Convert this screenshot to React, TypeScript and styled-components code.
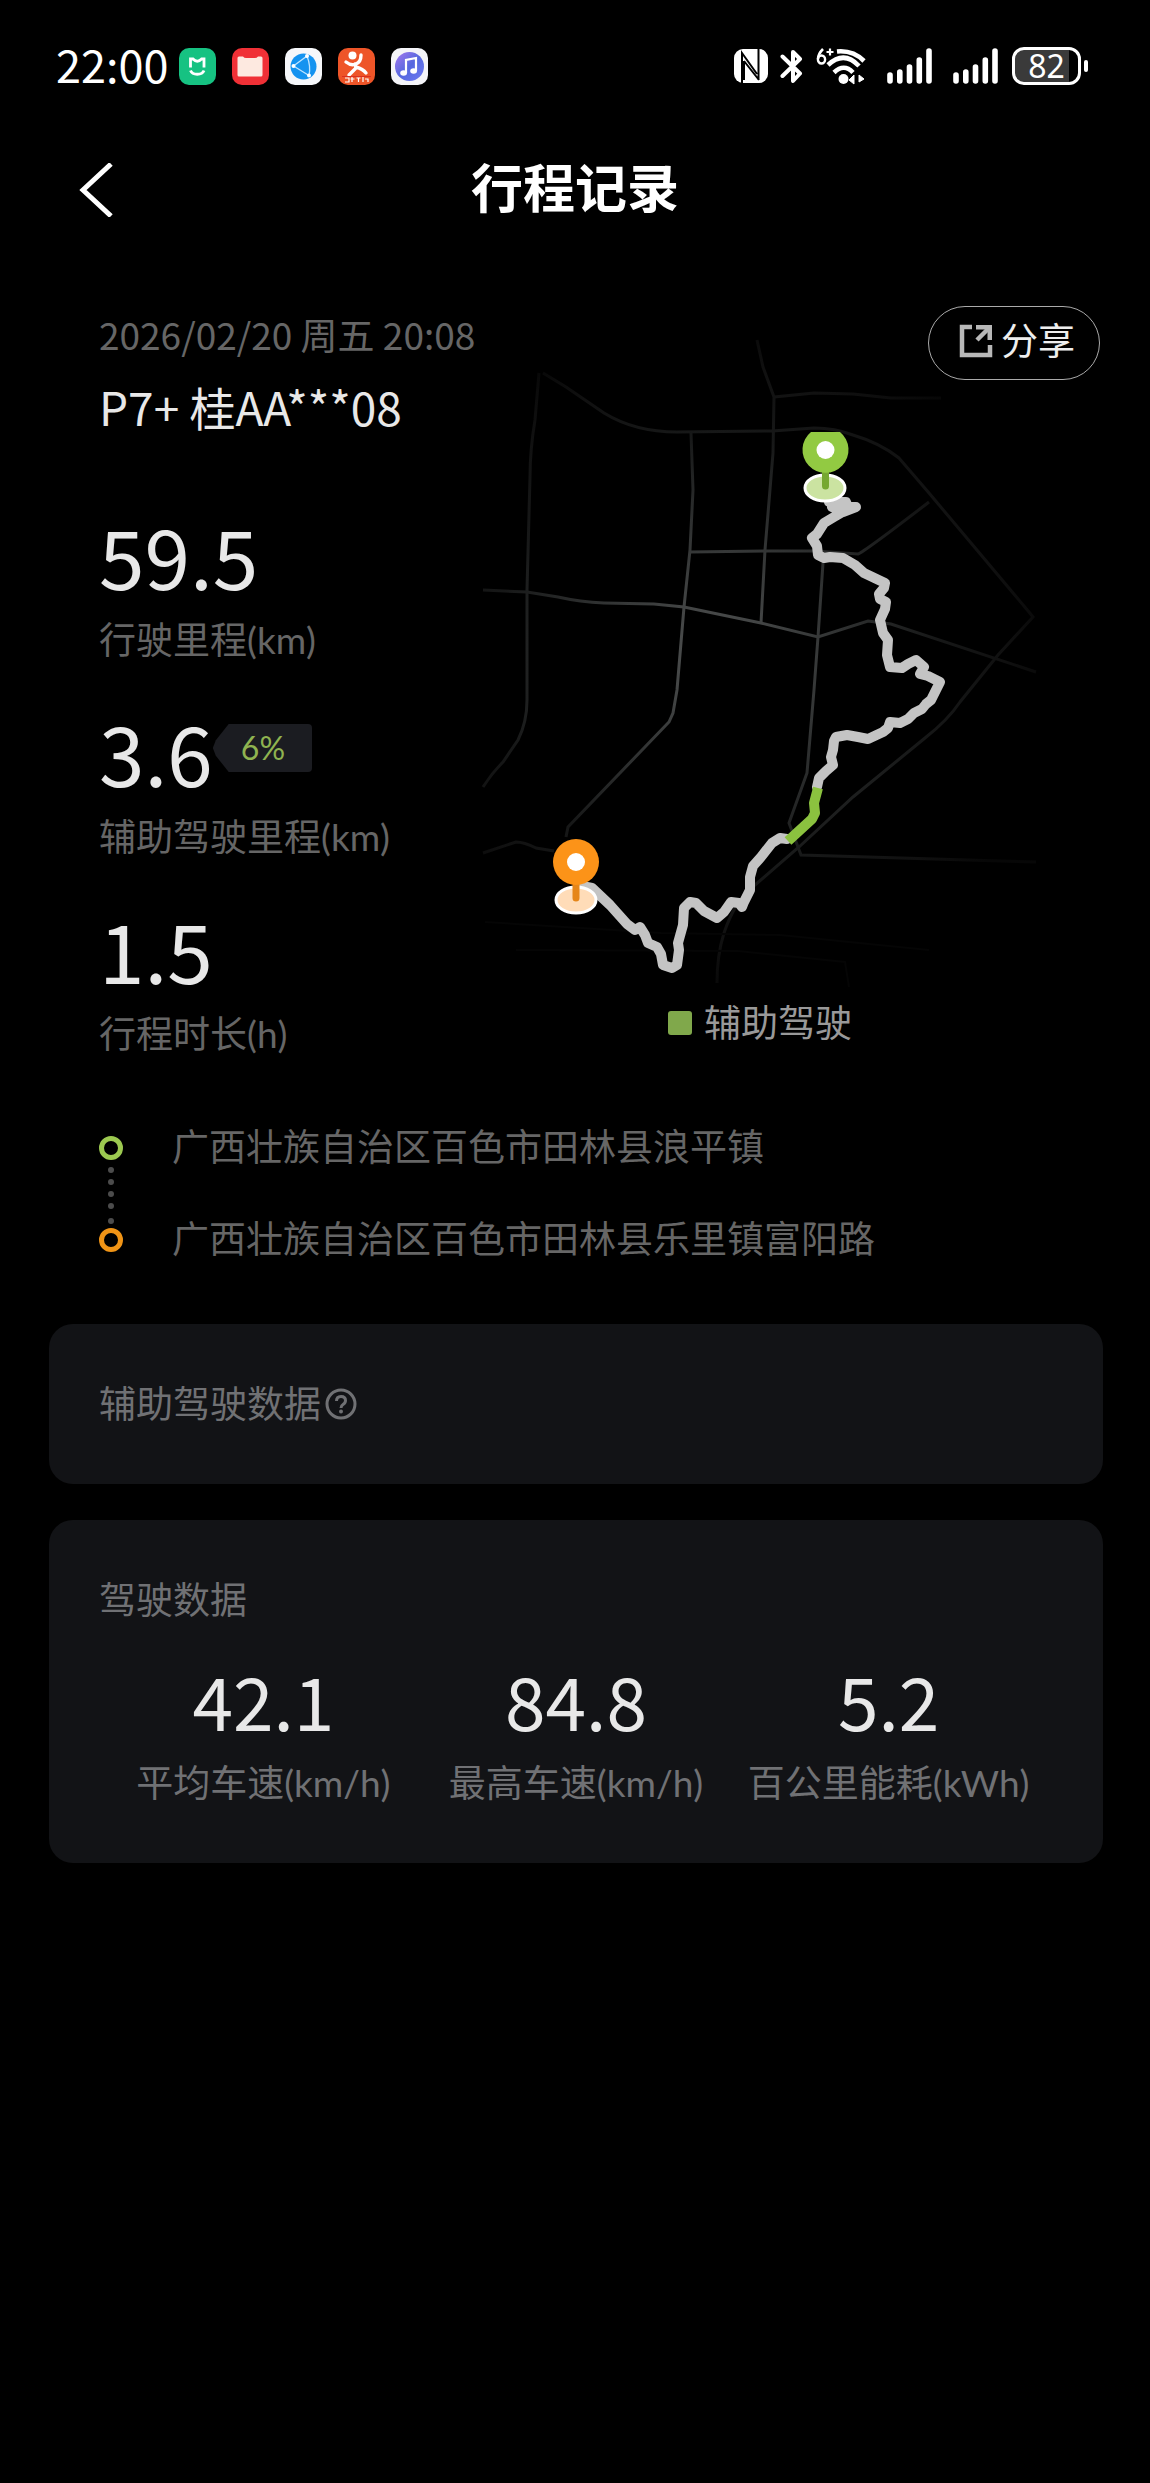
import React from 'react';
import styled, { createGlobalStyle } from 'styled-components';

const GlobalStyle = createGlobalStyle`
  * { box-sizing: border-box; }
  body {
    margin: 0;
    background: #000;
    color: #e8e8e8;
    font-family: Lato, "Noto Sans CJK SC", sans-serif;
  }
  h1, h2, p, ul, dl, dd { margin: 0; padding: 0; }
  svg { display: block; flex: none; }
`;

const numerals = '"Noto Sans CJK SC", sans-serif';

const Page = styled.div`
  min-height: 100vh;
  background: #000;
`;

const StatusBar = styled.div`
  display: flex;
  justify-content: space-between;
  align-items: center;
  height: 132px;
  padding: 0 62px 0 56px;
`;

const StatusGroup = styled.div<{ $gap: number }>`
  display: flex;
  align-items: center;
  gap: ${(p) => p.$gap}px;
`;

const Clock = styled.time`
  padding-bottom: 4px;
  font-family: ${numerals};
  font-size: 45px;
  line-height: 56px;
  color: #fff;
`;

const Battery = styled.div`
  display: flex;
  align-items: center;
  gap: 3px;

  &::after {
    content: '';
    width: 4px;
    height: 12px;
    border-radius: 2px;
    background: #fff;
  }
`;

const BatteryBody = styled.span`
  display: flex;
  align-items: center;
  justify-content: center;
  width: 69px;
  height: 38px;
  border: 3px solid #fff;
  border-radius: 12px;
  background: linear-gradient(90deg, #3a3a3a 86%, #000 86%);
  font-family: "Noto Sans", sans-serif;
  font-size: 32px;
  line-height: 32px;
  color: #fff;
`;

const TitleBar = styled.header`
  display: grid;
  grid-template-columns: 64px 1fr 64px;
  align-items: center;
  height: 116px;
  padding: 0 64px;
`;

const BackButton = styled.button`
  display: flex;
  justify-content: center;
  padding: 0;
  border: 0;
  background: none;
  color: #fff;
`;

const Title = styled.h1`
  padding-bottom: 4px;
  font-size: 52px;
  line-height: 64px;
  font-weight: 700;
  text-align: center;
  color: #fff;
`;

const Overview = styled.section`
  display: grid;
  grid-template-columns: 383px 1fr;
  padding: 58px 50px 0 99px;
`;

const Summary = styled.div`
  padding-top: 4px;
  white-space: nowrap;
`;

const TripDate = styled.p`
  font-family: ${numerals};
  font-size: 37px;
  line-height: 48px;
  color: #666;
`;

const Vehicle = styled.p`
  margin-top: 20px;
  font-family: ${numerals};
  font-size: 46px;
  line-height: 56px;
`;

const StatList = styled.dl`
  display: flex;
  flex-direction: column;
  gap: 40px;
  margin-top: 73px;
`;

const Stat = styled.div`
  display: flex;
  flex-direction: column-reverse;
  gap: 13px;
`;

const StatLabel = styled.dt`
  font-size: 37px;
  line-height: 48px;
  color: #666;
`;

const StatValue = styled.dd`
  display: flex;
  font-family: ${numerals};
  font-size: 82px;
  line-height: 96px;
`;

const Badge = styled.span`
  align-self: flex-start;
  margin-top: 20px;
  padding: 0 27px 0 28px;
  border-radius: 4px;
  background: #1b1c21;
  clip-path: polygon(16% 0, 100% 0, 100% 100%, 16% 100%, 3% 66%, 0 50%, 3% 34%);
  font-family: Lato, sans-serif;
  font-size: 32px;
  line-height: 48px;
  color: #8fb350;
`;

const MapSide = styled.div`
  display: flex;
  flex-direction: column;
`;

const ShareButton = styled.button`
  display: flex;
  align-items: center;
  justify-content: center;
  gap: 8px;
  align-self: flex-end;
  width: 172px;
  height: 74px;
  padding: 0 0 4px 6px;
  border: 1px solid #aaa;
  border-radius: 37px;
  background: none;
  font-family: inherit;
  font-size: 37px;
  line-height: 48px;
  color: #eee;
`;

const MapFigure = styled.figure`
  margin: 0;
  padding-right: 62px;

  svg {
    width: 100%;
    height: auto;
    overflow: visible;
  }
`;

const Legend = styled.figcaption`
  display: flex;
  align-items: center;
  justify-content: center;
  gap: 12px;
  font-size: 37px;
  line-height: 48px;
  color: #999;

  &::before {
    content: '';
    width: 24px;
    height: 24px;
    border-radius: 3px;
    background: #80a84b;
  }
`;

const Places = styled.section`
  display: flex;
  gap: 49px;
  padding: 65px 50px 0 99px;
`;

const PlaceList = styled.ul`
  display: flex;
  flex-direction: column;
  gap: 44px;
  list-style: none;
  font-size: 37px;
  line-height: 48px;
  color: #666;
`;

const Cards = styled.main`
  display: flex;
  flex-direction: column;
  gap: 36px;
  padding: 61px 47px 60px 49px;
`;

const Card = styled.section`
  padding: 56px 50px;
  border-radius: 24px;
  background: #121316;
`;

const CardTitle = styled.h2`
  display: flex;
  align-items: center;
  gap: 4px;
  font-size: 37px;
  line-height: 48px;
  font-weight: 400;
  color: #707174;
`;

const HelpButton = styled.button`
  padding: 0;
  border: 0;
  background: none;
  color: inherit;
`;

const Metrics = styled.dl`
  display: grid;
  grid-template-columns: repeat(3, 1fr);
  margin: 31px 8px 0;
`;

const Metric = styled.div`
  display: flex;
  flex-direction: column-reverse;
  gap: 16px;
  text-align: center;
  white-space: nowrap;
`;

const MetricLabel = styled.dt`
  font-size: 37px;
  line-height: 48px;
  color: #707174;
`;

const MetricValue = styled.dd`
  font-family: ${numerals};
  font-size: 73px;
  line-height: 88px;
`;

const appIconProps = { width: 37, height: 37, viewBox: '0 0 37 37', 'aria-hidden': true };

const AppIcons = () => (
  <StatusGroup $gap={16}>
    <svg {...appIconProps}>
      <rect width="37" height="37" rx="10" fill="#16c282" />
      <path d="M11.500 19.500V11h2.500q4.300 4.500 8.600 0H25v8.500M11.500 22.500c2 5 11.500 5 13.500 0" fill="none" stroke="#fff" strokeWidth="2.800" />
    </svg>
    <svg {...appIconProps}>
      <rect width="37" height="37" rx="10" fill="#f03036" />
      <path d="M5.500 10q0-1.500 1.500-1.500h4q1.500 2 4 1.500h7q2.500.5 4-1.500h3q1.500 0 1.500 1.500v17q0 1.500-1.500 1.500H7q-1.500 0-1.500-1.500z" fill="#fde9e0" />
    </svg>
    <svg {...appIconProps}>
      <rect width="37" height="37" rx="10" fill="#f6f7fa" />
      <circle cx="18.500" cy="18.500" r="13" fill="#1593f0" />
      <path d="M22 8 8.500 18 24 27.500Q26 18 22 8" fill="none" stroke="#bfe4ff" strokeWidth="1.300" />
      <g fill="#fff"><circle cx="22" cy="8" r="2" /><circle cx="8.500" cy="18" r="2" /><circle cx="24" cy="27.500" r="2" /></g>
    </svg>
    <svg {...appIconProps}>
      <rect width="37" height="37" rx="10" fill="#ee5528" />
      <circle cx="14.500" cy="7.500" r="4" fill="#fff" />
      <path d="M8 14q5 4 10 2 5-2 5-9M17 16l1 4-7 7M18 19q7 2 10 6" fill="none" stroke="#fff" strokeWidth="3.400" strokeLinecap="round" />
      <path d="M4 28.500h29" stroke="#d93020" strokeWidth="1" />
      <path d="M7 30h4v4H7M14 29v5M12.500 31h4M18.500 30h4M20.500 30v4M25 29v5M27 31h3v3" fill="none" stroke="#fff" strokeWidth="1.200" />
    </svg>
    <svg {...appIconProps}>
      <defs>
        <linearGradient id="note" x1="0" y1="0" x2="1" y2="1">
          <stop offset="0" stopColor="#a778ee" />
          <stop offset=".5" stopColor="#5668df" />
          <stop offset="1" stopColor="#6e7bf2" />
        </linearGradient>
      </defs>
      <rect width="37" height="37" rx="10" fill="#f4f4f8" />
      <circle cx="18.500" cy="18.500" r="14.500" fill="url(#note)" />
      <path d="M15 25V12l10-2v13" fill="none" stroke="#fff" strokeWidth="2.200" />
      <ellipse cx="12.600" cy="25" rx="3.400" ry="2.800" fill="#fff" />
      <ellipse cx="22.600" cy="23" rx="3.400" ry="2.800" fill="#fff" />
    </svg>
  </StatusGroup>
);

const Signal = () => (
  <svg width="45" height="36" viewBox="0 0 45 36" aria-hidden>
    <path d="M3 27v6M12.800 24v9M22.500 19v14M32.300 12v21M42 3v30" stroke="#fff" strokeWidth="5.600" strokeLinecap="round" />
  </svg>
);

const Radios = () => (
  <StatusGroup $gap={12}>
    <svg width="34" height="34" viewBox="0 0 34 34" aria-hidden>
      <rect width="34" height="34" rx="9" fill="#fff" />
      <path d="M8 34V4L23 25M10 12 25 31M10 12v19M24.500 0v31" fill="none" stroke="#000" strokeWidth="2" />
    </svg>
    <svg width="24" height="37" viewBox="0 0 24 37" aria-hidden>
      <path d="M2.500 8.500 20 25.500 13 33V4l7 7L2.500 28" fill="none" stroke="#fff" strokeWidth="4" strokeLinejoin="round" strokeLinecap="round" />
    </svg>
    <svg width="50" height="38" viewBox="0 0 50 38" aria-hidden>
      <g fill="none" stroke="#fff" strokeWidth="4.600" strokeLinecap="butt">
        <path d="M21 4.500Q37 3 48 14" />
        <path d="M12 18Q28 3 43 19" />
        <path d="M18 25.500Q28 16 37 25.500" />
      </g>
      <circle cx="27.500" cy="32" r="5" fill="#fff" />
      <path d="M38 28v9l-5-4zM43 28l5 4-5 3z" fill="#fff" stroke="#fff" strokeWidth="1" />
      <path d="M7 2Q2 7 2 12" stroke="#fff" strokeWidth="2.600" fill="none" />
      <ellipse cx="5.500" cy="12.500" rx="3.600" ry="4" fill="none" stroke="#fff" strokeWidth="2.400" />
      <path d="M10.500 5h7M14 1.500v7" stroke="#fff" strokeWidth="2.200" />
    </svg>
  </StatusGroup>
);

const roads = [
  'M483 590L527 592L558 597Q580 602 604 603L654 604L684 607L761 623L818 637L868 621L891 624L1036 672',
  'M539 373L535 420Q530 450 530 477L527 590V700Q527 722 518 740L503 762Q492 773 483 787',
  'M543 373L566 387L604 413Q635 432 677 432L772 431L814 428Q835 428 853 435Q880 443 899 458L929 493L1029 612L1033 617L998 655L960 702Q948 720 925 738L853 797L799 847L755 885Q735 900 724 933Q717 955 717 983',
  'M757 340L763 367L774 397L773 453L765 550L761 623',
  'M774 397L814 393L853 394L891 398H941',
  'M691 433L693 490L690 550L684 607L677 690L673 713L669 722L568 827L566 837',
  'M690 552L765 551H814L858 554Q864 552 929 502',
  'M823 563L818 637L814 690L807 773L789 823L801 855L1036 862',
  'M483 853L516 842Q524 842 536 848L554 851',
];

const faintRoads = [
  'M485 922L661 933L780 935L929 950',
  'M516 950L738 951L845 962L849 987',
];

const manualStart =
  'M829 502L846 502L848 507L856 507L843 512L832 507L846 510L834 517L824 523L817 534L812 538L817 546L818 555L824 558L830 557L843 558L855 565L864 573L885 583L884 588L879 594L880 599L886 602L885 609L880 620L883 633L888 640L887 655L890 667L902 668L908 664L916 660L924 667L920 674L928 676L940 682L936 690L931 700L926 704L922 709L914 713L908 719L900 723L890 722L888 728L883 732L868 739L858 737L847 735L836 737L834 741L833 750L831 757L833 765L826 771L819 778L817 787';
const assisted = 'M818 788L814 803L815 813L812 819L788 841';
const manualEnd =
  'M787 839L780 838L772 843L761 857L753 866L750 877L750 890L744 902L742 907L739 903L731 902L724 912L717 918L704 911L696 903L690 902L684 908L683 925L678 943L679 950L677 965L672 968L663 965L661 954L657 947L648 943L645 935L640 927L635 930L627 924L610 905L592 888L582 886';

const TripMap = () => (
  <svg viewBox="482 380 556 619" role="img" aria-label="行程轨迹">
    <defs>
      <radialGradient id="fade" gradientUnits="userSpaceOnUse" cx="715" cy="655" r="340">
        <stop offset="0" stopColor="#505252" />
        <stop offset=".35" stopColor="#323434" />
        <stop offset=".65" stopColor="#171818" />
        <stop offset=".85" stopColor="#101010" />
        <stop offset="1" stopColor="#070707" />
      </radialGradient>
    </defs>
    <g fill="none" stroke="url(#fade)" strokeWidth="3">
      {roads.map((d) => <path key={d} d={d} />)}
    </g>
    <g fill="none" stroke="#050505" strokeWidth="2">
      {faintRoads.map((d) => <path key={d} d={d} />)}
    </g>
    <g fill="none" strokeWidth="10" strokeLinejoin="round">
      <path d={manualStart} stroke="#c4c4c4" strokeLinecap="round" />
      <path d={manualEnd} stroke="#c4c4c4" strokeLinecap="round" />
      <path d={assisted} stroke="#8bc23f" />
    </g>
    <ellipse cx="825" cy="488" rx="20" ry="13" fill="#cbe3a1" stroke="#fff" strokeWidth="3" />
    <path d="M825.500 470v16" stroke="#76a830" strokeWidth="7" strokeLinecap="round" />
    <path d="M811 432h29A23 23 0 1 1 811 432z" fill="#92ca42" />
    <circle cx="825.500" cy="450" r="9" fill="#fff" />
    <ellipse cx="576" cy="900" rx="20" ry="13" fill="#ffdcb8" stroke="#fff" strokeWidth="3" />
    <path d="M576 882v16" stroke="#e68619" strokeWidth="7" strokeLinecap="round" />
    <circle cx="576" cy="862" r="23" fill="#fc9318" />
    <circle cx="576" cy="862" r="9" fill="#fff" />
  </svg>
);

const PlaceMarkers = () => (
  <svg width="24" height="140" viewBox="0 0 24 140" aria-hidden>
    <circle cx="12" cy="25" r="9.500" fill="none" stroke="#9cc950" strokeWidth="5" />
    <g fill="#4c4c4c">
      {[47, 59, 71, 83, 98].map((y) => <circle key={y} cx="12" cy={y} r="3" />)}
    </g>
    <circle cx="12" cy="117" r="9.500" fill="none" stroke="#f09416" strokeWidth="5" />
  </svg>
);

const stats = [
  { label: '行驶里程(km)', value: '59.5' },
  { label: '辅助驾驶里程(km)', value: '3.6', share: '6%' },
  { label: '行程时长(h)', value: '1.5' },
];

const metrics = [
  { label: '平均车速(km/h)', value: '42.1' },
  { label: '最高车速(km/h)', value: '84.8' },
  { label: '百公里能耗(kWh)', value: '5.2' },
];

const App: React.FC = () => (
  <Page>
    <GlobalStyle />
    <StatusBar>
      <StatusGroup $gap={11}>
        <Clock>22:00</Clock>
        <AppIcons />
      </StatusGroup>
      <StatusGroup $gap={21}>
        <Radios />
        <Signal />
        <StatusGroup $gap={14}>
          <Signal />
          <Battery><BatteryBody>82</BatteryBody></Battery>
        </StatusGroup>
      </StatusGroup>
    </StatusBar>

    <TitleBar>
      <BackButton type="button" aria-label="返回">
        <svg width="34" height="54" viewBox="0 0 34 54" aria-hidden>
          <path d="M32 1 4 27l28 26" fill="none" stroke="currentColor" strokeWidth="5" />
        </svg>
      </BackButton>
      <Title>行程记录</Title>
    </TitleBar>

    <Overview>
      <Summary>
        <TripDate>2026/02/20 周五 20:08</TripDate>
        <Vehicle>P7+ 桂AA***08</Vehicle>
        <StatList>
          {stats.map((s) => (
            <Stat key={s.label}>
              <StatLabel>{s.label}</StatLabel>
              <StatValue>
                {s.value}
                {s.share && <Badge>{s.share}</Badge>}
              </StatValue>
            </Stat>
          ))}
        </StatList>
      </Summary>
      <MapSide>
        <ShareButton type="button">
          <svg width="34" height="34" viewBox="0 0 34 34" aria-hidden>
            <path d="M13 3H3v28h28V21M18 16 29 5" fill="none" stroke="#b8b8b8" strokeWidth="4.500" />
            <path d="M17 1h16v15h-4.500V5.500H17z" fill="#b8b8b8" />
          </svg>
          分享
        </ShareButton>
        <MapFigure>
          <TripMap />
          <Legend>辅助驾驶</Legend>
        </MapFigure>
      </MapSide>
    </Overview>

    <Places>
      <PlaceMarkers />
      <PlaceList>
        <li>广西壮族自治区百色市田林县浪平镇</li>
        <li>广西壮族自治区百色市田林县乐里镇富阳路</li>
      </PlaceList>
    </Places>

    <Cards>
      <Card>
        <CardTitle>
          辅助驾驶数据
          <HelpButton type="button" aria-label="说明">
            <svg width="32" height="32" viewBox="0 0 32 32" aria-hidden>
              <circle cx="16" cy="16" r="14" fill="none" stroke="currentColor" strokeWidth="3" />
              <path d="M11.500 13q0-4.500 4.500-4.500t4.500 4q0 2.500-2.500 4-2 1.200-2 3.500" fill="none" stroke="currentColor" strokeWidth="3" />
              <circle cx="16" cy="23.500" r="2" fill="currentColor" />
            </svg>
          </HelpButton>
        </CardTitle>
      </Card>
      <Card>
        <CardTitle>驾驶数据</CardTitle>
        <Metrics>
          {metrics.map((m) => (
            <Metric key={m.label}>
              <MetricLabel>{m.label}</MetricLabel>
              <MetricValue>{m.value}</MetricValue>
            </Metric>
          ))}
        </Metrics>
      </Card>
    </Cards>
  </Page>
);

export default App;
